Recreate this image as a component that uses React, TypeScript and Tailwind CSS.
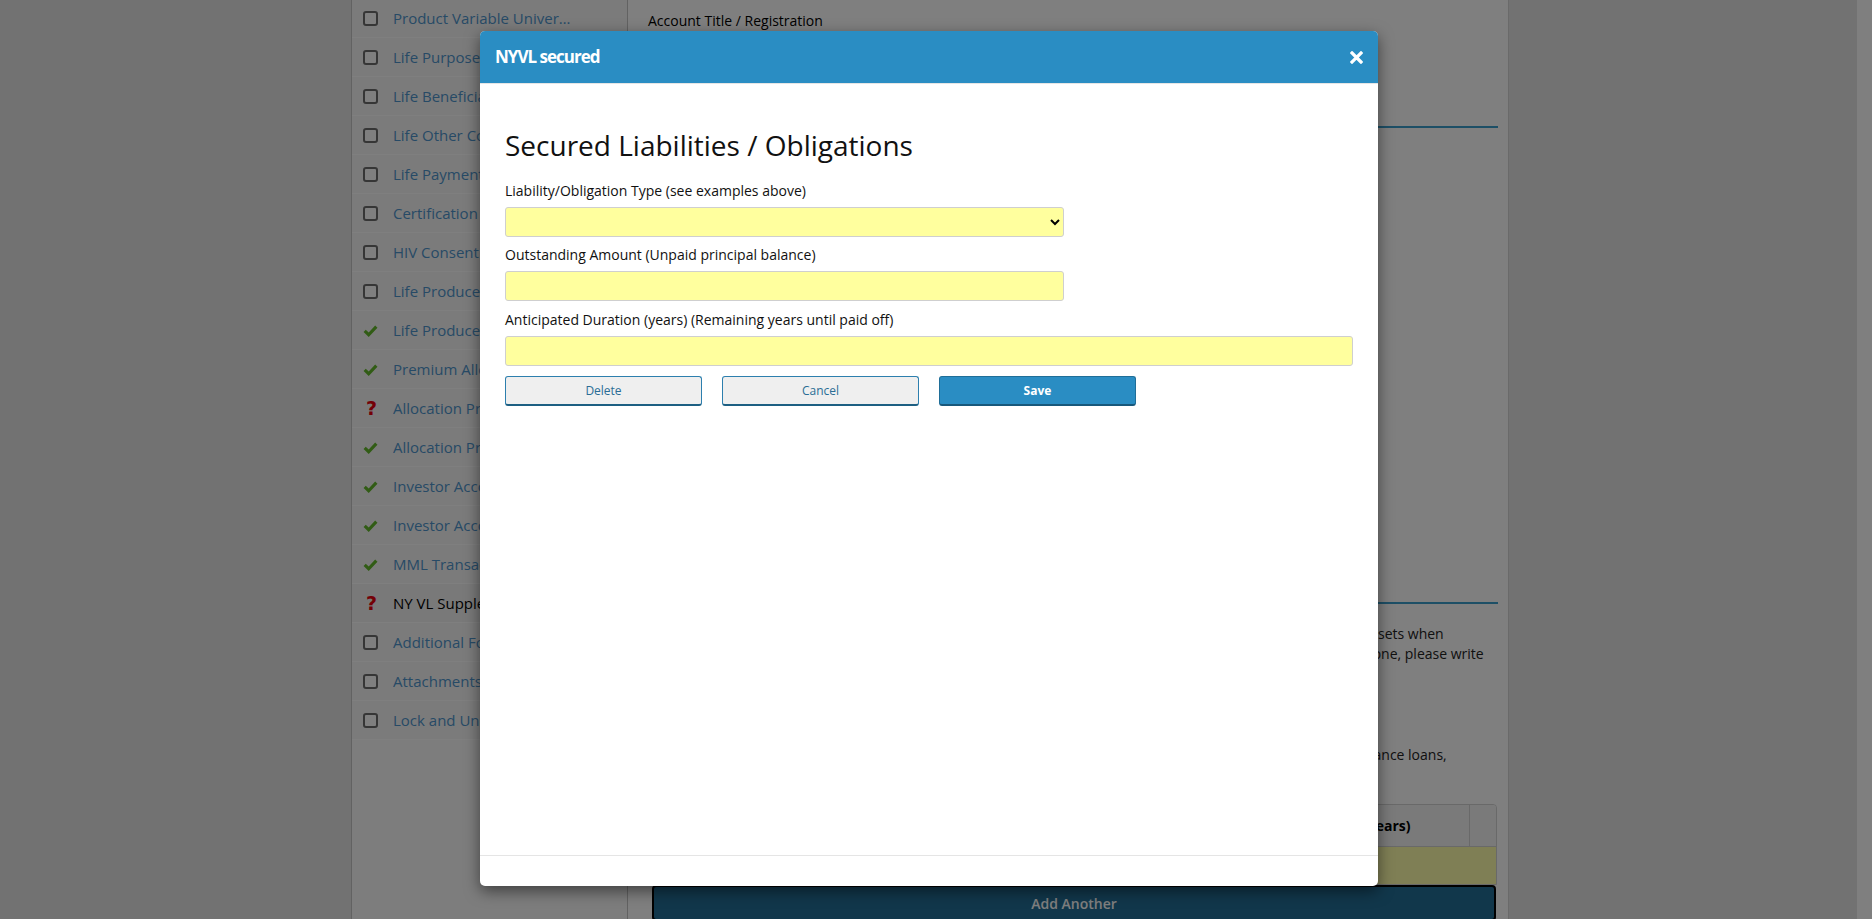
import React from 'react'

type Status = 'none' | 'ok' | 'warn'

const NAV: { label: string; status: Status; active?: boolean }[] = [
  { label: 'Product Variable Universal Life', status: 'none' },
  { label: 'Life Purpose of Insurance', status: 'none' },
  { label: 'Life Beneficiary Designation', status: 'none' },
  { label: 'Life Other Coverage', status: 'none' },
  { label: 'Life Payment Information', status: 'none' },
  { label: 'Certification and Signatures', status: 'none' },
  { label: 'HIV Consent Form', status: 'none' },
  { label: 'Life Producer Report', status: 'none' },
  { label: 'Life Producer Certification', status: 'ok' },
  { label: 'Premium Allocation', status: 'ok' },
  { label: 'Allocation Program Election', status: 'warn' },
  { label: 'Allocation Program Details', status: 'ok' },
  { label: 'Investor Account Profile', status: 'ok' },
  { label: 'Investor Account Suitability', status: 'ok' },
  { label: 'MML Transaction Form', status: 'ok' },
  { label: 'NY VL Supplement', status: 'warn', active: true },
  { label: 'Additional Forms', status: 'none' },
  { label: 'Attachments', status: 'none' },
  { label: 'Lock and Unlock', status: 'none' },
]

function StatusIcon({ status }: { status: Status }) {
  if (status === 'ok')
    return (
      <svg width="18" height="15" viewBox="0 0 18 15">
        <polyline points="2,8 6.8,12.6 16,2.8" fill="none" stroke="#62b82a" strokeWidth="3.8" strokeLinejoin="miter" />
      </svg>
    )
  if (status === 'warn')
    return (
      <span className="ml-[3px] text-[19px] leading-none font-bold text-[#e8000c] font-['DejaVu_Sans',sans-serif]">?</span>
    )
  return <span className="block h-[15px] w-[15px] rounded-[3px] border-2 border-[#6c6c6c] bg-white" />
}

function Sidebar() {
  return (
    <aside className="w-[277px] shrink-0 border-x border-[#c4c4c4] bg-[#fbfbfb]">
      <ul className="-mt-px">
        {NAV.map((item) => (
          <li
            key={item.label}
            className={`flex h-[39px] items-center gap-[15px] border-b border-[#ffffff] pl-[11px] ${
              item.active ? 'bg-[#f2f2f2]' : 'bg-[#f7f7f7]'
            }`}
          >
            <span className="flex w-[15px] items-center">
              <StatusIcon status={item.status} />
            </span>
            <span
              className={`w-[180px] truncate text-[15px] ${item.active ? 'text-black' : 'text-[#4f95cc]'}`}
            >
              {item.label}
            </span>
          </li>
        ))}
      </ul>
    </aside>
  )
}

function MainContent() {
  return (
    <main className="w-[881px] shrink-0 border-r border-[#d4d4d4] bg-[#fefefe] pl-5 pr-[10px] pt-[11px] text-[14px] text-[#222]">
      <div className="leading-[20px] text-black">Account Title / Registration</div>
      <div className="mt-[6px] h-[30px] w-[560px] rounded-[3px] border border-[#ccc] bg-white" />
      <div className="mt-[35px] border-b-2 border-[#3a9ecc] pb-[4px] text-[20px] leading-[20px]">Liabilities</div>

      <div className="h-[452px] w-[700px] pt-[14px] leading-[20px]">
        <p>Please provide the following information about the client's liabilities and obligations.</p>
      </div>

      <div className="border-b-2 border-[#3a9ecc] pb-[2px] text-[20px] leading-[20px]">Secured Liabilities / Obligations</div>
      <p className="mt-[20px] leading-[20px]">
        Secured liabilities and obligations are debts that are backed by collateral, and should be netted against all the assets when
        <br />
        determining net worth. List each secured liability or any obligation below with its unpaid principal. If there are none, please write
        <br />
        "None".
      </p>
      <p className="mt-[61px] leading-[20px]">
        Examples include mortgages, home equity lines of credit, vehicle loans, margin accounts, and policy or life insurance loans,
        <br />
        etc.
      </p>

      <div className="mx-[3px] mr-px mt-[19px] overflow-hidden rounded-t-[4px] border border-[#d2d2d2]">
        <div className="grid h-[41px] grid-cols-[276px_276px_1fr_27px] items-center bg-[#f5f5f5] font-bold text-black">
          <div className="px-2">Liability/Obligation Type</div>
          <div className="px-2">Outstanding Amount</div>
          <div className="px-2">Anticipated Duration (years)</div>
          <div className="h-full border-l border-[#d2d2d2]" />
        </div>
        <div className="h-[38px] border-t border-[#d2d2d2] bg-[#fffeaa]" />
      </div>
      <button className="ml-[4px] h-[36px] w-[844px] rounded-[4px] border-2 border-black bg-[#226e96] text-[14px] font-semibold text-white">
        Add Another
      </button>
    </main>
  )
}

function CloseIcon() {
  return (
    <svg width="13" height="13" viewBox="0 0 13 13">
      <path d="M2 2 L11 11 M11 2 L2 11" stroke="white" strokeWidth="3.2" strokeLinecap="square" />
    </svg>
  )
}

function Modal() {
  const input = 'h-[30px] rounded-[3px] border border-[#cfcfcf] bg-[#ffff9e]'
  const label = 'leading-[20px] text-[14px] text-[#111]'
  return (
    <div className="absolute left-[480px] top-[31px] flex h-[855px] w-[898px] flex-col rounded-[5px] bg-white shadow-[0_5px_15px_rgba(0,0,0,0.5)]">
      <div className="flex h-[53px] shrink-0 items-center justify-between rounded-t-[5px] border-b border-[#e5e5e5] bg-[#2a8dc3] pl-[15px] pr-[15px]">
        <span className="text-[17px] font-bold tracking-[-1px] text-white">NYVL secured</span>
        <CloseIcon />
      </div>
      <div className="flex-1 px-[25px] pt-[45px]">
        <h1 className="text-[28px] leading-[32px] text-[#111]">Secured Liabilities / Obligations</h1>
        <div className={`mt-[20px] ${label}`}>Liability/Obligation Type (see examples above)</div>
        <select className={`mt-[6px] block w-[559px] ${input} px-1 text-[14px]`} defaultValue="">
          <option value=""></option>
          <option>Mortgage</option>
          <option>Home Equity Loan</option>
        </select>
        <div className={`mt-[8px] ${label}`}>Outstanding Amount (Unpaid principal balance)</div>
        <div className={`mt-[6px] w-[559px] ${input}`} />
        <div className={`mt-[9px] ${label}`}>Anticipated Duration (years) (Remaining years until paid off)</div>
        <div className={`mt-[6px] w-full ${input}`} />
        <div className="mt-[10px] flex gap-[20px]">
          <button className="h-[30px] w-[197px] rounded-[3px] border border-b-2 border-[#2d7fae] border-b-[#1d5f82] bg-[#efefef] text-[12px] text-[#2a6d95]">
            Delete
          </button>
          <button className="h-[30px] w-[197px] rounded-[3px] border border-b-2 border-[#2d7fae] border-b-[#1d5f82] bg-[#efefef] text-[12px] text-[#2a6d95]">
            Cancel
          </button>
          <button className="h-[30px] w-[197px] rounded-[3px] border border-b-2 border-[#1f6e98] border-b-[#18587b] bg-[#2a8dc3] text-[12px] font-bold text-white">
            Save
          </button>
        </div>
      </div>
      <div className="h-[31px] shrink-0 border-t border-[#e5e5e5]" />
    </div>
  )
}

export default function App() {
  return (
    <div className="relative h-[919px] w-full overflow-hidden font-['Open_Sans',sans-serif]">
      <div className="flex h-full bg-[#e4e4e4]">
        <div className="flex flex-1 pl-[351px]">
          <Sidebar />
          <MainContent />
        </div>
        <div className="w-[15px] shrink-0 bg-[#fefefe]" />
      </div>
      <div className="absolute inset-0 bg-black/50" />
      <Modal />
    </div>
  )
}
